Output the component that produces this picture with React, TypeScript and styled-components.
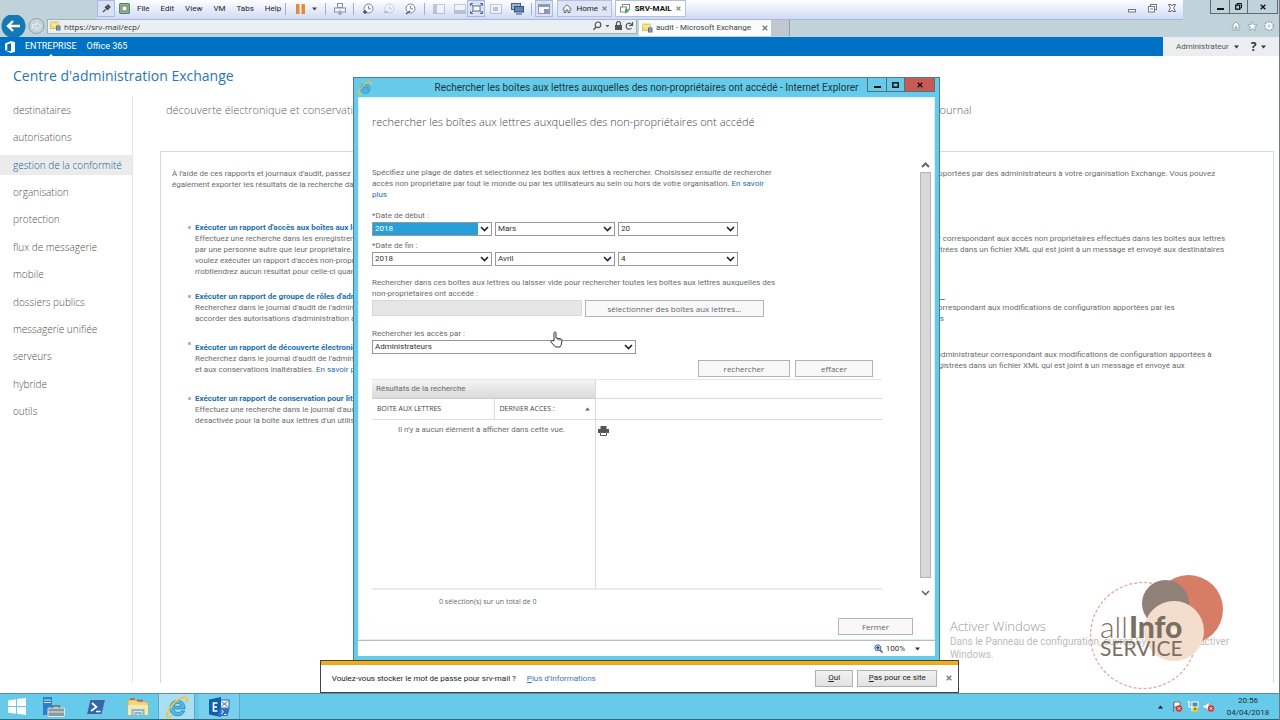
import React from "react";
import styled, { createGlobalStyle, css } from "styled-components";

const ui = `"Open Sans", "Noto Sans", sans-serif`;
const small = `Roboto, "Open Sans", sans-serif`;
const cyan = "#66cbea";
const link = "#1a70b0";

const Global = createGlobalStyle`
  * { box-sizing: border-box; }
  html, body { margin: 0; height: 100%; }
  body { font-family: ${small}; font-size: 8px; line-height: 11px; color: #6b6b6b; background: #fff; overflow: hidden; }
  button, select, input { font-family: inherit; margin: 0; }
  a { color: ${link}; text-decoration: none; }
  svg { display: block; flex: none; }
  p, h1, h2, h3, ul { margin: 0; padding: 0; font-weight: 400; }
  ul { list-style: none; }
`;

/* ---------- desktop ---------- */

const Desktop = styled.div`
  position: relative;
  display: flex;
  flex-direction: column;
  min-height: 100vh;
  overflow: hidden;
  background: #fff;
  border-right: 1px solid #6f7a80;
`;

const PlainButton = styled.button`
  display: flex;
  align-items: center;
  justify-content: center;
  padding: 0;
  border: 0;
  background: none;
  color: inherit;
`;

/* ---------- browser frame ---------- */

const BrowserFrame = styled.header`
  flex: none;
  display: flex;
  flex-direction: column;
  height: 37px;
  background: #c1d3da;
`;

const CaptionRow = styled.div`
  display: flex;
  justify-content: flex-end;
  height: 17px;
  padding-right: 1px;
`;

const CaptionButtons = styled.div`
  display: flex;
  height: 14px;
  border: 1px solid #5d6b72;
  border-top: 0;
`;

const CaptionButton = styled(PlainButton)<{ $w: number; $red?: boolean }>`
  width: ${(p) => p.$w}px;
  color: #111;
  background: ${(p) => (p.$red ? "#c75a52" : "transparent")};
  & + & { border-left: 1px solid #5d6b72; }
`;

const AddressRow = styled.div`
  display: flex;
  align-items: center;
  height: 18px;
`;

const NavButtons = styled.div`
  display: flex;
  align-items: center;
  width: 47px;
  height: 18px;
`;

const AddressBar = styled.label`
  display: flex;
  align-items: center;
  gap: 3px;
  flex: 0 0 590px;
  height: 15px;
  padding: 0 2px;
  border: 1px solid #9fb1b8;
  background: #e9eff2;
`;

const AddressInput = styled.input`
  flex: 1;
  min-width: 0;
  height: 13px;
  padding: 0;
  border: 0;
  background: none;
  font-family: ${ui};
  font-size: 8px;
  color: #333;
`;

const BrowserTab = styled.div`
  display: flex;
  align-items: center;
  gap: 3px;
  width: 132px;
  height: 16px;
  margin: 3px 0 0 2px;
  padding: 0 3px;
  background: #fafbfc;
  font-size: 8px;
  color: #444;
`;

const Grow = styled.span`
  flex: 1;
  white-space: nowrap;
`;

const NewTab = styled(PlainButton)`
  width: 19px;
  height: 16px;
  margin-top: 3px;
  background: #bfc8cf;
  border-right: 1px solid #90a0a8;
`;

const ToolIcons = styled.div`
  display: flex;
  gap: 6px;
  margin-left: auto;
  padding-right: 5px;
`;

/* ---------- virtual machine toolbar ---------- */

const VmBar = styled.div`
  position: absolute;
  top: 0;
  left: 97px;
  right: 96px;
  display: flex;
  align-items: center;
  height: 20px;
  padding: 0 7px 2px 0;
  background: linear-gradient(#fdfdff, #e6ebf9 55%, #d0daf4);
  border-bottom: 1px solid #a9b8d8;
  font-size: 8px;
  color: #222;
`;

const VmMenu = styled.nav`
  display: flex;
  gap: 11px;
  padding: 0 4px;
`;

const VmTool = styled(PlainButton)<{ $on?: boolean; $w?: number }>`
  width: ${(p) => p.$w ?? 26}px;
  height: 17px;
  ${(p) => p.$on && css`background: #d8e1f6; border: 1px solid #a9bbe0;`}
`;

const VmDivider = styled.i`
  width: 1px;
  height: 12px;
  background: #a7afc4;
`;

const VmTab = styled(PlainButton)<{ $active?: boolean }>`
  gap: 3px;
  height: 17px;
  width: 55px;
  padding: 0 4px;
  border: 1px solid #b5c0dc;
  background: #dde5f6;
  font-size: 8px;
  color: #222;
  ${(p) => p.$active && css`width: 71px; margin-left: 3px; background: #fff; font-weight: 700; color: #111;`}
`;

const VmWindowButtons = styled.div`
  display: flex;
  gap: 11px;
  margin-left: auto;
`;

/* ---------- Office bar ---------- */

const OfficeBar = styled.div`
  flex: none;
  display: flex;
  align-items: stretch;
  height: 19px;
  background: #0072c6;
  font-family: ${small};
  font-size: 9px;
  color: #fff;
  a { color: #fff; }
`;

const OfficeLinks = styled.nav`
  display: flex;
  align-items: center;
  flex: 1;
  gap: 10px;
  padding-left: 5px;
`;

const OfficeTab = styled.a<{ $current?: boolean }>`
  position: relative;
  display: flex;
  align-items: center;
  height: 19px;
  ${(p) => p.$current && css`
    &::after {
      content: "";
      position: absolute;
      left: 50%;
      bottom: 0;
      margin-left: -2px;
      border: solid transparent;
      border-width: 0 2px 2px;
      border-bottom-color: #fff;
    }
  `}
`;

const OfficeUser = styled.div`
  display: flex;
  align-items: center;
  gap: 5px;
  width: 116px;
  padding-left: 13px;
  background: #ecedf0;
  font-size: 8px;
  color: #555;
`;

const HelpMark = styled.b`
  margin-left: 7px;
  font-family: ${ui};
  font-size: 12px;
  color: #333;
`;

/* ---------- Exchange admin page ---------- */

const PageTitle = styled.h1`
  flex: none;
  padding: 10px 13px 0;
  height: 40px;
  font-family: ${ui};
  font-size: 14px;
  line-height: 20px;
  color: #2a76b3;
`;

const AdminPage = styled.main`
  flex: 1;
  display: grid;
  grid-template-columns: 133px 1fr;
  padding-bottom: 10px;
`;

const SideNav = styled.nav`
  border-right: 1px solid #e6e6e6;
`;

const SideList = styled.ul`
  display: flex;
  flex-direction: column;
  justify-content: space-between;
  min-height: 325px;
  padding-top: 4px;
`;

const SideItem = styled.li<{ $active?: boolean }>`
  height: 20px;
  padding-left: 13px;
  background: ${(p) => (p.$active ? "#ebebec" : "transparent")};
  font-family: ${ui};
  font-size: 10px;
  font-weight: 300;
  line-height: 20px;
  a { color: ${(p) => (p.$active ? "#0f5d9f" : "#505050")}; }
`;

const Content = styled.section`
  display: flex;
  flex-direction: column;
  padding: 0 5px 0 27px;
`;

const Tabs = styled.nav`
  display: grid;
  grid-template-columns: 771px 1fr;
  height: 55px;
  padding: 5px 0 0 6px;
  font-family: ${ui};
  font-size: 11px;
  font-weight: 300;
  line-height: 18px;
  a { color: #606060; white-space: nowrap; }
`;

const Panel = styled.div`
  flex: 1;
  border: 1px solid #d9d9d9;
  border-bottom: 0;
  padding: 16px 30px 0 11px;
  white-space: nowrap;
`;

const Intro = styled.div`
  display: grid;
  grid-template-columns: 762px 1fr;
`;

const ReportGrid = styled.div`
  display: grid;
  grid-template-columns: 726px 1fr;
  row-gap: 14px;
  padding: 32px 0 0 16px;
`;

const Report = styled.article<{ $shifted?: boolean }>`
  position: relative;
  padding: ${(p) => (p.$shifted ? "4px 0 4px 7px" : "0 0 0 7px")};
  &::before {
    content: "";
    position: absolute;
    left: 0;
    top: 4px;
    width: 3px;
    height: 3px;
    border-radius: 1px;
    background: #9db9d4;
  }
`;

const ExportReport = styled.article``;

const ReportTitle = styled.h3`
  font-size: 8px;
  line-height: 11px;
  min-height: 11px;
  font-weight: 700;
`;

/* ---------- pop-up window ---------- */

const Popup = styled.section`
  position: absolute;
  top: 77px;
  left: 353px;
  width: 587px;
  height: 584px;
  display: flex;
  flex-direction: column;
  padding: 0 4px 4px;
  border: 1px solid #4a7f93;
  background: ${cyan};
`;

const PopupTitle = styled.header`
  display: flex;
  align-items: flex-start;
  height: 19px;
`;

const PopupIcon = styled.span`
  padding-top: 3px;
`;

const PopupCaption = styled.h2`
  flex: 1;
  padding-left: 54px;
  text-align: center;
  font-size: 10px;
  line-height: 19px;
  color: #1c3640;
  white-space: nowrap;
`;

const PopupPage = styled.div`
  flex: 1;
  display: flex;
  flex-direction: column;
  padding: 16px 3px 0 13px;
  border: 1px solid #d9f1fa;
  background: #fff;
`;

const PopupHeading = styled.h2`
  height: 46px;
  font-family: ${ui};
  font-size: 11px;
  font-weight: 300;
  line-height: 16px;
  color: #444;
`;

const ScrollRow = styled.div`
  display: flex;
  justify-content: space-between;
  height: 447px;
`;

const Form = styled.form`
  width: 510px;
  display: flex;
  flex-direction: column;
  padding-top: 7px;
  white-space: nowrap;
`;

const Label = styled.label<{ $top?: number }>`
  display: block;
  margin-top: ${(p) => p.$top ?? 0}px;
  padding-bottom: 1px;
`;

const DateRow = styled.div`
  display: flex;
  gap: 3px;
`;

const SelectBox = styled.span<{ $w: number }>`
  position: relative;
  display: block;
  width: ${(p) => p.$w}px;
  height: 14px;
  border: 1px solid #999;
  background: #fff;
  svg { position: absolute; right: 2px; top: 3px; pointer-events: none; }
`;

const Select = styled.select<{ $focus?: boolean }>`
  appearance: none;
  display: block;
  width: ${(p) => (p.$focus ? "calc(100% - 13px)" : "100%")};
  height: 12px;
  padding: 0 2px;
  border: 0;
  border-radius: 0;
  outline: 0;
  font-size: 8px;
  line-height: 12px;
  color: ${(p) => (p.$focus ? "#fff" : "#333")};
  background: ${(p) => (p.$focus ? "#289fda" : "transparent")};
`;

const PickRow = styled.div`
  display: flex;
  gap: 3px;
`;

const MailboxInput = styled.input`
  width: 210px;
  height: 16px;
  border: 1px solid #d8d8d8;
  background: #e6e6e6;
`;

const FormButton = styled.button<{ $w: number }>`
  width: ${(p) => p.$w}px;
  height: 17px;
  padding: 0;
  border: 1px solid #b3b3b3;
  background: #f8f8f8;
  && { font-family: ${ui}; }
  font-size: 8px;
  line-height: 14px;
  color: #666;
`;

const ActionRow = styled.div`
  display: flex;
  justify-content: flex-end;
  gap: 5px;
  padding: 6px 9px 2px 0;
`;

const Results = styled.div`
  flex: 1;
  display: grid;
  grid-template-columns: 224px 1fr;
  border-top: 1px solid #e3e3e3;
  border-bottom: 2px solid #ebebeb;
`;

const ResultTable = styled.table`
  width: 100%;
  border-collapse: collapse;
  caption {
    height: 19px;
    padding-left: 4px;
    text-align: left;
    line-height: 18px;
    background: linear-gradient(#f5f5f5, #d9d9d9);
    border-bottom: 1px solid #ccc;
  }
  th {
    height: 20px;
    padding: 0 5px;
    text-align: left;
    font-family: ${ui};
    font-size: 7px;
    font-weight: 400;
    color: #444;
    border-bottom: 1px solid #ddd;
  }
  th:first-child { width: 122px; }
  th + th { border-left: 1px solid #ddd; }
  td { padding: 4px 0 0 26px; }
`;

const ResultPane = styled.div`
  border-right: 1px solid #d9d9d9;
`;

const SortHead = styled.span`
  display: flex;
  align-items: center;
  justify-content: space-between;
`;

const DetailPane = styled.div`
  display: grid;
  grid-template-rows: 19px 21px 1fr;
`;

const Rule = styled.div`
  border-bottom: 1px solid #d9d9d9;
`;

const PrintButton = styled(PlainButton)`
  align-self: start;
  justify-self: start;
  margin: 6px 0 0 2px;
`;

const ScrollBar = styled.div`
  display: flex;
  flex-direction: column;
  align-items: center;
  justify-content: space-between;
  width: 11px;
  height: 438px;
  padding: 2px 0;
`;

const ScrollThumb = styled.div`
  flex: 1;
  width: 11px;
  margin: 4px 0 12px;
  border: 1px solid #b5b5b5;
  background: #d8d8d8;
`;

const Selection = styled.p`
  padding: 6px 0 0 67px;
  font-family: ${ui};
  font-size: 7px;
`;

const CloseRow = styled.div`
  display: flex;
  justify-content: flex-end;
  padding: 11px 18px 0 0;
`;

const StatusBar = styled.footer`
  display: flex;
  align-items: center;
  justify-content: flex-end;
  gap: 3px;
  height: 16px;
  padding-right: 15px;
  border-top: 1px solid #bbb;
  background: #fff;
  font-size: 8px;
  color: #333;
`;

const ZoomArrow = styled.span`
  margin-left: 7px;
`;

const Pointer = styled.div`
  position: absolute;
  left: 550px;
  top: 331px;
`;

/* ---------- password notification ---------- */

const Notice = styled.aside`
  position: absolute;
  left: 25%;
  width: 50%;
  bottom: 27px;
  display: flex;
  align-items: center;
  height: 33px;
  padding: 3px 6px 0 11px;
  border: 1px solid #444;
  background: linear-gradient(#f3b31c, #e8a61a) 0 0 / 100% 4px no-repeat #fff;
  font-size: 8px;
  color: #222;
`;

const NoticeLink = styled.a`
  margin: 0 auto 0 11px;
  color: #3a72c4;
`;

const NoticeButton = styled.button<{ $w: number }>`
  width: ${(p) => p.$w}px;
  height: 17px;
  margin-right: 4px;
  padding: 0;
  border: 1px solid #b0b0b0;
  background: linear-gradient(#f1f1f1, #e2e2e2);
  font-size: 8px;
  line-height: 14px;
  color: #222;
`;

const NoticeClose = styled(PlainButton)`
  margin-left: 5px;
`;

/* ---------- watermarks ---------- */

const Activation = styled.div`
  position: absolute;
  left: 950px;
  bottom: 59px;
  font-size: 10px;
  line-height: 13px;
  color: #bcbcbc;
  white-space: nowrap;
`;

const ActivationTitle = styled.p`
  font-family: ${ui};
  font-size: 13px;
  font-weight: 300;
  line-height: 18px;
  color: #999;
`;

const Brand = styled.div`
  position: absolute;
  right: 51px;
  bottom: 28px;
`;

/* ---------- taskbar ---------- */

const TaskBar = styled.footer`
  flex: none;
  display: flex;
  align-items: stretch;
  height: 27px;
  border-top: 1px solid #5d8fa3;
  border-bottom: 1px solid #35667a;
  background: ${cyan};
`;

const Task = styled(PlainButton)<{ $w: number; $open?: boolean; $front?: boolean }>`
  width: ${(p) => p.$w}px;
  ${(p) => p.$open && css`background: #78d0ec; border-right: 1px solid #5aa9c4;`}
  ${(p) => p.$front && css`background: #a9dff1; border-left: 1px solid #5aa9c4; margin-right: 4px;`}
`;

const Tray = styled.div`
  display: flex;
  align-items: center;
  gap: 7px;
  margin-left: auto;
`;

const Clock = styled.time`
  width: 50px;
  margin: 0 6px 0 0;
  text-align: center;
  font-size: 8px;
  line-height: 12px;
  color: #1c2d35;
`;

/* ---------- drawings ---------- */

const Chevron = ({ c = "#222" }: { c?: string }) => (
  <svg width="9" height="6" viewBox="0 0 9 6"><path d="M1 1l3.5 3.5L8 1" fill="none" stroke={c} strokeWidth="1.6" /></svg>
);
const Caret = ({ c = "#333", up = false }: { c?: string; up?: boolean }) => (
  <svg width="5" height="4" viewBox="0 0 5 4"><path d={up ? "M0 3.5h5L2.5.5z" : "M0 .5h5L2.5 3.5z"} fill={c} /></svg>
);
const Cross = ({ c = "#777", s = 6 }: { c?: string; s?: number }) => (
  <svg width={s} height={s} viewBox="0 0 6 6"><path d="M.7.7l4.6 4.6M5.3.7L.7 5.3" stroke={c} strokeWidth="1.3" /></svg>
);
const Dash = () => <svg width="7" height="8" viewBox="0 0 7 8"><path d="M0 6h7" stroke="#111" strokeWidth="2" /></svg>;
const Square = () => <svg width="7" height="6" viewBox="0 0 7 6"><rect x=".8" y=".8" width="5.4" height="4.4" fill="none" stroke="#111" strokeWidth="1.5" /></svg>;
const Restore = ({ c = "#111" }: { c?: string }) => (
  <svg width="7" height="7" viewBox="0 0 7 7"><g fill="none" stroke={c}><path d="M2 2V.5h4.5V5H5" /><rect x=".7" y="2.2" width="4" height="4" strokeWidth="1.3" /></g></svg>
);
const MailSite = () => (
  <svg width="11" height="10" viewBox="0 0 11 10">
    <rect x=".5" y="1" width="8" height="6.5" fill="#f6dc6e" stroke="#c9a640" strokeWidth=".6" />
    <path d="M.5 1.5l4 3 4-3" fill="none" stroke="#fff7cf" />
    <rect x="6" y="4.5" width="4.5" height="5" fill="#5c7093" /><path d="M7 6h2.5M7 8h2.5" stroke="#cfd9ee" strokeWidth=".7" />
  </svg>
);
const Explorer = ({ s }: { s: number }) => (
  <svg width={s} height={s} viewBox="1 1 20 20">
    <path d="M18.3 12.8H8.2c.2 2 1.6 3.2 3.6 3.2 1.300 0 2.300-.5 3-1.400h3.200C17 17.500 14.600 19 11.600 19 7.400 19 4.600 16.200 4.600 12S7.500 5 11.600 5c4.300 0 6.900 3 6.700 7.800zM8.300 10.400h6.500c-.3-1.800-1.500-2.700-3.200-2.700s-2.900 1-3.300 2.700z" fill="#4fb9ea" stroke="#1f7fb8" strokeWidth=".7" />
    <path d="M19.500 7c1.800-4-.2-6-4.700-4C8.600 5.600 3 12.500 2 17.300c-.6 2.900 1.400 3.300 4 2" fill="none" stroke="#f0c33a" strokeWidth="1.700" />
  </svg>
);
const ClockIcon = ({ badge, faded }: { badge?: string; faded?: boolean }) => (
  <svg width="12" height="12" viewBox="0 0 12 12" opacity={faded ? 0.35 : 1}>
    <circle cx="6.500" cy="5.500" r="4.500" fill="#f8f9fc" stroke="#7c8598" /><path d="M6.500 3v2.800H9" fill="none" stroke="#7c8598" />
    {badge && <path d={badge} fill="none" stroke="#3d5878" strokeWidth="1.500" />}
  </svg>
);
const Layout = ({ d, faded }: { d: string; faded?: boolean }) => (
  <svg width="12" height="10" viewBox="0 0 12 10" opacity={faded ? 0.5 : 1}>
    <rect x=".5" y=".5" width="11" height="9" fill="#f5f7fc" stroke="#8f9ab2" /><path d={d} fill="#8f9ab2" />
  </svg>
);

const BrandLogo = () => (
  <svg width="140" height="120" viewBox="1088 572 140 120" role="img" aria-label="allInfo SERVICE">
    <circle cx="1143.500" cy="635.500" r="53" fill="none" stroke="#dda59d" strokeWidth="1.200" strokeDasharray="3 2" />
    <circle cx="1188.500" cy="609.500" r="34.500" fill="#d77c65" />
    <circle cx="1165.500" cy="603.500" r="23.500" fill="#8f8177" />
    <circle cx="1174" cy="631" r="30" fill="#f3decd" />
    <g fill="#7a6f63" fontFamily="Lato, sans-serif">
      <text x="1100" y="638" fontSize="30" fontWeight="300">all</text>
      <text x="1129" y="638" fontSize="30" fontWeight="900">Info</text>
      <text x="1100" y="656" fontSize="21">SERVICE</text>
    </g>
    <circle cx="1174.500" cy="631" r="2.500" fill="#fff6cf" />
  </svg>
);

const sideItems = [
  "destinataires", "autorisations", "gestion de la conformité", "organisation", "protection", "flux de messagerie",
  "mobile", "dossiers publics", "messagerie unifiée", "serveurs", "hybride", "outils",
];

function Picker({ id, w, value, focus }: { id: string; w: number; value: string; focus?: boolean }) {
  return (
    <SelectBox $w={w}>
      <Select id={id} aria-label={value} defaultValue={value} $focus={focus}><option>{value}</option></Select>
      <Chevron />
    </SelectBox>
  );
}

function VmToolbar() {
  return (
    <VmBar>
      <VmTool $on $w={18} aria-label="Épingler">
        <svg width="9" height="9" viewBox="0 0 9 9"><path d="M1 8l2.500-2.500M3 3l3 3M4 3l2-2 2 2-2 2z" stroke="#444" fill="#777" strokeWidth="1.200" /></svg>
      </VmTool>
      <VmTool $w={18} aria-label="Station">
        <svg width="11" height="11" viewBox="0 0 11 11"><rect x=".7" y=".7" width="9.600" height="9.600" rx="1" fill="#e9b63b" stroke="#2f8b95" strokeWidth="1.300" /><rect x="3" y="3" width="5" height="5" fill="#fff" stroke="#3b77b0" /></svg>
      </VmTool>
      <VmMenu>{["File", "Edit", "View", "VM", "Tabs", "Help"].map((m) => <span key={m}>{m}</span>)}</VmMenu>
      <VmDivider />
      <VmTool $w={39} aria-label="Pause">
        <svg width="22" height="10" viewBox="0 0 22 10"><path d="M1 0h3.500v10H1zM6.500 0H10v10H6.500z" fill="#e08b3a" /><path d="M17 3.500h5L19.500 6.500z" fill="#444" /></svg>
      </VmTool>
      <VmDivider />
      <VmTool $w={27} aria-label="Envoyer">
        <svg width="12" height="12" viewBox="0 0 12 12"><g fill="#f4f5f8" stroke="#8a8f9c"><rect x="3.500" y=".5" width="5" height="4" /><rect x=".5" y="5" width="11" height="4" /><path d="M6 7v4.500M4 10l2 1.500L8 10" fill="none" /></g></svg>
      </VmTool>
      <VmDivider />
      <VmTool $w={28} aria-label="Instantané"><ClockIcon badge="M1 9h4M3 7v4" /></VmTool>
      <VmTool $w={14} aria-label="Rétablir"><ClockIcon faded badge="M1 9h4" /></VmTool>
      <VmTool $w={28} aria-label="Gérer"><ClockIcon badge="M2 11l4-3" /></VmTool>
      <VmDivider />
      <VmTool $w={28} aria-label="Bibliothèque"><Layout faded d="M1 1h3v8H1z" /></VmTool>
      <VmTool $w={14} aria-label="Miniatures"><Layout faded d="M1 6h10v3H1z" /></VmTool>
      <VmTool $on $w={18} aria-label="Plein écran">
        <svg width="13" height="11" viewBox="0 0 13 11"><rect x="3" y="3" width="7" height="5" fill="#fff" stroke="#5d6f8e" /><path d="M.5 3V.5H3M10 .5h2.500V3M12.500 8v2.500H10M3 10.500H.5V8M1 1l2 2M12 1l-2 2M12 10l-2-2M1 10l2-2" fill="none" stroke="#5d6f8e" /></svg>
      </VmTool>
      <VmTool $w={22} aria-label="Unity"><Layout faded d="M3 3h5v4H3z" /></VmTool>
      <VmTool $w={20} aria-label="Écrans">
        <svg width="13" height="12" viewBox="0 0 13 12"><rect x=".5" y=".5" width="9" height="6" fill="#9db4d6" stroke="#4a5f82" /><rect x="3.500" y="3.500" width="9" height="5.500" fill="#5f86b8" stroke="#3b506f" /><path d="M5 11h6" stroke="#3b506f" /></svg>
      </VmTool>
      <VmTool $w={8} aria-hidden><VmDivider /></VmTool>
      <VmTool $on $w={18} aria-label="Console"><Layout d="M1 1h10v2H1zM6 5h5v4H6z" /></VmTool>
      <VmTool $w={4} aria-hidden />
      <VmTab>
        <svg width="10" height="9" viewBox="0 0 10 9"><path d="M.5 5L5 .8 9.500 5M2 4.500v4h2V6h2v2.500h2v-4" fill="#fff" stroke="#666" /></svg>
        <Grow>Home</Grow><Cross s={5} />
      </VmTab>
      <VmTab $active>
        <svg width="10" height="10" viewBox="0 0 10 10"><rect x="2.500" y=".5" width="7" height="5" fill="#fff" stroke="#888" /><rect x=".5" y="3" width="6" height="5" fill="#fff" stroke="#888" /><path d="M5 4.500l4.500 2.500L5 9.800z" fill="#48b04a" /></svg>
        <Grow>SRV-MAIL</Grow><Cross s={5} />
      </VmTab>
      <VmWindowButtons>
        <svg width="9" height="9" viewBox="0 0 9 9"><rect x=".5" y="5.500" width="7" height="2.500" fill="#fff" stroke="#777" /></svg>
        <svg width="9" height="9" viewBox="0 0 9 9"><g fill="#fff" stroke="#777"><rect x="2.500" y=".5" width="6" height="5" /><rect x=".5" y="2.500" width="6" height="5.500" /><path d="M2 5h3" /></g></svg>
        <svg width="8" height="8" viewBox="0 0 8 8"><path d="M.5.500H3L4 2l1-1.500h2.500L5.500 4l2 3.500H5L4 6 3 7.500H.5L2.500 4z" fill="#fff" stroke="#666" /></svg>
      </VmWindowButtons>
    </VmBar>
  );
}

function ExchangePopup() {
  return (
    <Popup>
      <PopupTitle>
        <PopupIcon><Explorer s={14} /></PopupIcon>
        <PopupCaption>Rechercher les boîtes aux lettres auxquelles des non-propriétaires ont accédé - Internet Explorer</PopupCaption>
        <CaptionButtons>
          <CaptionButton $w={18} aria-label="Réduire"><Dash /></CaptionButton>
          <CaptionButton $w={18} aria-label="Agrandir"><Square /></CaptionButton>
          <CaptionButton $w={30} $red aria-label="Fermer la fenêtre"><Cross c="#111" /></CaptionButton>
        </CaptionButtons>
      </PopupTitle>
      <PopupPage>
        <PopupHeading>rechercher les boîtes aux lettres auxquelles des non-propriétaires ont accédé</PopupHeading>
        <ScrollRow>
          <Form onSubmit={(e) => e.preventDefault()}>
            <p>
              Spécifiez une plage de dates et sélectionnez les boîtes aux lettres à rechercher. Choisissez ensuite de rechercher<br />
              accès non propriétaire par tout le monde ou par les utilisateurs au sein ou hors de votre organisation. <a href="#aide">En savoir<br />plus</a>
            </p>
            <Label htmlFor="debut-annee" $top={10}>*Date de début :</Label>
            <DateRow>
              <Picker id="debut-annee" w={120} value="2018" focus />
              <Picker id="debut-mois" w={120} value="Mars" />
              <Picker id="debut-jour" w={120} value="20" />
            </DateRow>
            <Label htmlFor="fin-annee" $top={4}>*Date de fin :</Label>
            <DateRow>
              <Picker id="fin-annee" w={120} value="2018" />
              <Picker id="fin-mois" w={120} value="Avril" />
              <Picker id="fin-jour" w={120} value="4" />
            </DateRow>
            <Label htmlFor="boites" $top={11}>
              Rechercher dans ces boîtes aux lettres ou laisser vide pour rechercher toutes les boîtes aux lettres auxquelles des<br />
              non-propriétaires ont accédé :
            </Label>
            <PickRow>
              <MailboxInput id="boites" disabled />
              <FormButton type="button" $w={179}>sélectionner des boîtes aux lettres...</FormButton>
            </PickRow>
            <Label htmlFor="acces" $top={11}>Rechercher les accès par :</Label>
            <Picker id="acces" w={264} value="Administrateurs" />
            <ActionRow>
              <FormButton type="submit" $w={92}>rechercher</FormButton>
              <FormButton type="reset" $w={78}>effacer</FormButton>
            </ActionRow>
            <Results>
              <ResultPane>
                <ResultTable>
                  <caption>Résultats de la recherche</caption>
                  <thead><tr><th>BOITE AUX LETTRES</th><th><SortHead>DERNIER ACCES :<Caret up c="#666" /></SortHead></th></tr></thead>
                  <tbody><tr><td colSpan={2}>Il n'y a aucun élément à afficher dans cette vue.</td></tr></tbody>
                </ResultTable>
              </ResultPane>
              <DetailPane>
                <Rule /><Rule />
                <PrintButton type="button" aria-label="Imprimer">
                  <svg width="11" height="10" viewBox="0 0 11 10"><path d="M2.500 0h6v3h-6zM0 3h11v4H9V6H2v1H0z" fill="#555" /><path d="M2.500 6.500h6v3h-6z" fill="#fff" stroke="#555" /></svg>
                </PrintButton>
              </DetailPane>
            </Results>
            <Selection>0 sélection(s) sur un total de 0</Selection>
          </Form>
          <ScrollBar><svg width="9" height="6" viewBox="0 0 9 6"><path d="M1 5l3.500-3.500L8 5" fill="none" stroke="#666" strokeWidth="2" /></svg><ScrollThumb /><Chevron c="#666" /></ScrollBar>
        </ScrollRow>
        <CloseRow><FormButton type="button" $w={75}>Fermer</FormButton></CloseRow>
      </PopupPage>
      <StatusBar>
        <svg width="9" height="9" viewBox="0 0 9 9"><circle cx="3.800" cy="3.800" r="3" fill="#cfe6f7" stroke="#3b6ea5" /><path d="M2 3.800h3.600M3.800 2v3.600" stroke="#235" /><path d="M6 6l2.600 2.600" stroke="#555" strokeWidth="1.500" /></svg>
        100%<ZoomArrow><Caret /></ZoomArrow>
      </StatusBar>
    </Popup>
  );
}

export default function App() {
  return (
    <Desktop>
      <Global />
      <BrowserFrame>
        <CaptionRow>
          <CaptionButtons>
            <CaptionButton $w={18} aria-label="Réduire"><Dash /></CaptionButton>
            <CaptionButton $w={18} aria-label="Restaurer"><Restore /></CaptionButton>
            <CaptionButton $w={30} aria-label="Fermer"><Cross c="#111" /></CaptionButton>
          </CaptionButtons>
        </CaptionRow>
        <AddressRow>
          <NavButtons>
            <svg width="47" height="22" viewBox="0 0 47 22">
              <circle cx="13.500" cy="11" r="12" fill="#1479b5" /><path d="M20 11H8M13 6l-5 5 5 5" fill="none" stroke="#fff" strokeWidth="2.400" />
              <circle cx="36.500" cy="11" r="7.500" fill="#c6d3d8" stroke="#8fa0a8" /><path d="M32.500 9.500h4V7l4.500 4-4.500 4v-2.500h-4z" fill="none" stroke="#e4ebee" />
            </svg>
          </NavButtons>
          <AddressBar>
            <MailSite />
            <AddressInput aria-label="Adresse" defaultValue="https://srv-mail/ecp/" />
            <svg width="42" height="10" viewBox="0 0 42 10">
              <circle cx="6" cy="3.800" r="2.800" fill="none" stroke="#555" strokeWidth="1.200" /><path d="M4 6L1.500 8.800" stroke="#555" strokeWidth="1.400" />
              <path d="M13.500 4h4l-2 2.200z" fill="#555" /><rect x="23" y="4" width="7" height="5" fill="#555" /><path d="M24.500 4V2.500a2 2 0 014 0V4" fill="none" stroke="#555" strokeWidth="1.200" />
              <path d="M40 4.500A3 3 0 1039.500 7M40.500 1v3.500H37" fill="none" stroke="#555" strokeWidth="1.200" />
            </svg>
          </AddressBar>
          <BrowserTab><MailSite /><Grow>audit - Microsoft Exchange</Grow><Cross /></BrowserTab>
          <NewTab aria-label="Nouvel onglet" />
          <ToolIcons>
            <svg width="10" height="10" viewBox="0 0 10 10"><path d="M.7 5L5 1l4.300 4M2 4.500v4.800h2V6h2v3.300h2V4.500" fill="#fff" stroke="#8a999f" strokeWidth=".8" /></svg>
            <svg width="11" height="10" viewBox="0 0 11 10"><path d="M5.500.5l1.300 3.200 3.500.2-2.700 2.200.9 3.400-3-1.900-3 1.900.9-3.400L.7 3.900l3.500-.2z" fill="#fff" stroke="#8a999f" strokeWidth=".7" /></svg>
            <svg width="10" height="10" viewBox="0 0 10 10"><circle cx="5" cy="5" r="4.200" fill="none" stroke="#8a999f" strokeWidth="1.400" strokeDasharray="1.600 1.400" /><circle cx="5" cy="5" r="2.700" fill="none" stroke="#fff" strokeWidth="1.800" /></svg>
          </ToolIcons>
        </AddressRow>
      </BrowserFrame>
      <VmToolbar />
      <OfficeBar>
        <OfficeLinks>
          <svg width="10" height="12" viewBox="0 0 10 12"><path d="M0 2.500L6 0l4 1.200v9.600L6 12 0 9.500l6 .8V2.200L2.300 3.200v5.300L0 9.500z" fill="#fff" /></svg>
          <OfficeTab $current href="#entreprise">ENTREPRISE</OfficeTab>
          <OfficeTab href="#office">Office 365</OfficeTab>
        </OfficeLinks>
        <OfficeUser>Administrateur<Caret /><HelpMark>?</HelpMark><Caret /></OfficeUser>
      </OfficeBar>
      <PageTitle>Centre d'administration Exchange</PageTitle>
      <AdminPage>
        <SideNav>
          <SideList>
            {sideItems.map((item) => (
              <SideItem key={item} $active={item === "gestion de la conformité"}><a href="#nav">{item}</a></SideItem>
            ))}
          </SideList>
        </SideNav>
        <Content>
          <Tabs><a href="#decouverte">découverte électronique et conservation</a><a href="#journal">journal</a></Tabs>
          <Panel>
            <Intro>
              <p>À l'aide de ces rapports et journaux d'audit, passez en<br />également exporter les résultats de la recherche dans</p>
              <p>apportées par des administrateurs à votre organisation Exchange. Vous pouvez</p>
            </Intro>
            <ReportGrid>
              <Report>
                <ReportTitle><a href="#r1">Exécuter un rapport d'accès aux boîtes aux lettres</a></ReportTitle>
                <p>Effectuez une recherche dans les enregistrements<br />par une personne autre que leur propriétaire. Si<br />voulez exécuter un rapport d'accès non-propriétaire<br />n'obtiendrez aucun résultat pour celle-ci quand</p>
              </Report>
              <ExportReport>
                <ReportTitle />
                <p>par leur correspondant aux accès non propriétaires effectués dans les boîtes aux lettres<br />enregistrées dans un fichier XML qui est joint à un message et envoyé aux destinataires</p>
              </ExportReport>
              <Report>
                <ReportTitle><a href="#r2">Exécuter un rapport de groupe de rôles d'administration</a></ReportTitle>
                <p>Recherchez dans le journal d'audit de l'administrateur<br />accorder des autorisations d'administration aux</p>
              </Report>
              <ExportReport>
                <ReportTitle><a href="#r5">d'audit__</a></ReportTitle>
                <p>audit correspondant aux modifications de configuration apportées par les<br /><a href="#plus">voir plus</a></p>
              </ExportReport>
              <Report $shifted>
                <ReportTitle><a href="#r3">Exécuter un rapport de découverte électronique</a></ReportTitle>
                <p>Recherchez dans le journal d'audit de l'administrateur<br />et aux conservations inaltérables. <a href="#plus">En savoir plus</a></p>
              </Report>
              <ExportReport>
                <ReportTitle />
                <p>dans l'administrateur correspondant aux modifications de configuration apportées à<br />et enregistrées dans un fichier XML qui est joint à un message et envoyé aux</p>
              </ExportReport>
              <Report>
                <ReportTitle><a href="#r4">Exécuter un rapport de conservation pour litige</a></ReportTitle>
                <p>Effectuez une recherche dans le journal d'audit<br />désactivée pour la boîte aux lettres d'un utilisateur</p>
              </Report>
            </ReportGrid>
          </Panel>
        </Content>
      </AdminPage>
      <TaskBar>
        <Task $w={34} aria-label="Démarrer">
          <svg width="18" height="17" viewBox="0 0 18 17"><path d="M0 2.500l8-1.200v6.700H0zM9 1.100L18 0v8H9zM0 9h8v6.700l-8-1.200zM9 9h9v8l-9-1.200z" fill="#fff" /></svg>
        </Task>
        <Task $w={40} aria-label="Gestionnaire de serveur">
          <svg width="22" height="20" viewBox="0 0 22 20"><rect x="0" y="0" width="9" height="18" fill="#2f7fc4" /><path d="M1 3h7M1 5.500h7" stroke="#cfe6fa" /><rect x="5" y="11" width="16.500" height="8.500" rx="1" fill="#8d979e" stroke="#e3e9ec" /><path d="M9.500 11V9h7v2" fill="none" stroke="#66727a" strokeWidth="1.300" /><path d="M5 15h16" stroke="#dfe5e8" /></svg>
        </Task>
        <Task $w={43} aria-label="PowerShell">
          <svg width="20" height="16" viewBox="0 0 20 16"><path d="M4 .5h15.500L16 15.500H.5z" fill="#2f6aa8" stroke="#8fb8de" /><path d="M6 4l4.500 4L5 12M10 12.500h4.500" fill="none" stroke="#fff" strokeWidth="1.700" /></svg>
        </Task>
        <Task $w={41} aria-label="Explorateur de fichiers">
          <svg width="22" height="20" viewBox="0 0 22 20"><path d="M1 3h8l2 2h10v13H1z" fill="#f0d585" stroke="#d3ad4d" /><path d="M3 2h5M10 3.500h6" stroke="#c25a3f" strokeWidth="1.500" /><path d="M1 8h20v10H1z" fill="#f8e8ad" /><path d="M5.500 19v-6h11v6M8.500 19v-3h5v3" fill="none" stroke="#7fb9dc" strokeWidth="2" /></svg>
        </Task>
        <Task $w={37} $open $front aria-label="Internet Explorer"><Explorer s={22} /></Task>
        <Task $w={41} $open aria-label="Exchange">
          <svg width="21" height="20" viewBox="0 0 21 20"><rect x="11" y="3" width="9" height="8" fill="#fff" stroke="#2a66a8" /><path d="M12.500 4.500l6 5M18.500 4.500l-6 5" stroke="#2a66a8" /><path d="M0 2.500L12 0v20L0 17.500z" fill="#1260a8" /><path d="M8.500 6h-4v8h4M4.500 10H8" fill="none" stroke="#fff" strokeWidth="1.700" /><path d="M11 11.500h9.500L18.500 19H9z" fill="#2f6fc0" /><path d="M12.500 13l2 2-2.500 2M15 17.500h2.500" fill="none" stroke="#fff" /></svg>
        </Task>
        <Tray>
          <Caret up c="#111" />
          <svg width="46" height="13" viewBox="0 0 46 13">
            <path d="M3.500 2v10M4 2h6v5H4z" fill="#fff" stroke="#777" /><circle cx="9" cy="8.500" r="3.200" fill="#d9352c" /><path d="M7.700 7.200l2.600 2.600M10.300 7.200L7.700 9.800" stroke="#fff" />
            <path d="M19 2v5h3v4M17.500 2h3" fill="none" stroke="#eee" strokeWidth="1.500" /><rect x="22" y="2" width="6" height="5" fill="#5d86a6" stroke="#fff" /><path d="M25 5.500l3.500 6.500h-7z" fill="#f5c518" /><path d="M25 8v2" stroke="#333" />
            <path d="M33 5h2.500L39 2v9l-3.500-3H33z" fill="#fff" stroke="#999" strokeWidth=".6" /><circle cx="41" cy="8.500" r="3.200" fill="#d9352c" /><path d="M39.700 7.200l2.600 2.600M42.300 7.200l-2.600 2.600" stroke="#fff" />
          </svg>
          <Clock>20:56<br />04/04/2018</Clock>
        </Tray>
      </TaskBar>
      <Activation>
        <ActivationTitle>Activer Windows</ActivationTitle>
        Dans le Panneau de configuration, ouvrez Système pour activer<br />Windows.
      </Activation>
      <Brand><BrandLogo /></Brand>
      <ExchangePopup />
      <Notice>
        Voulez-vous stocker le mot de passe pour srv-mail ?
        <NoticeLink href="#infos"><u>P</u>lus d'informations</NoticeLink>
        <NoticeButton $w={38}><u>O</u>ui</NoticeButton>
        <NoticeButton $w={80}><u>P</u>as pour ce site</NoticeButton>
        <NoticeClose aria-label="Fermer la notification"><Cross /></NoticeClose>
      </Notice>
      <Pointer>
        <svg width="13" height="17" viewBox="0 0 13 17"><path d="M4 10V2.200C4 .6 6 .6 6 2.200V7l5 1c1 .3 1 1 1 2l-1 4.500-1 1.500H5.500L1 11c-.5-1 .5-2 1.500-1.300z" fill="#fff" stroke="#333" /><path d="M8 7.500v2M10 8v2" stroke="#333" strokeWidth=".7" /></svg>
      </Pointer>
    </Desktop>
  );
}
